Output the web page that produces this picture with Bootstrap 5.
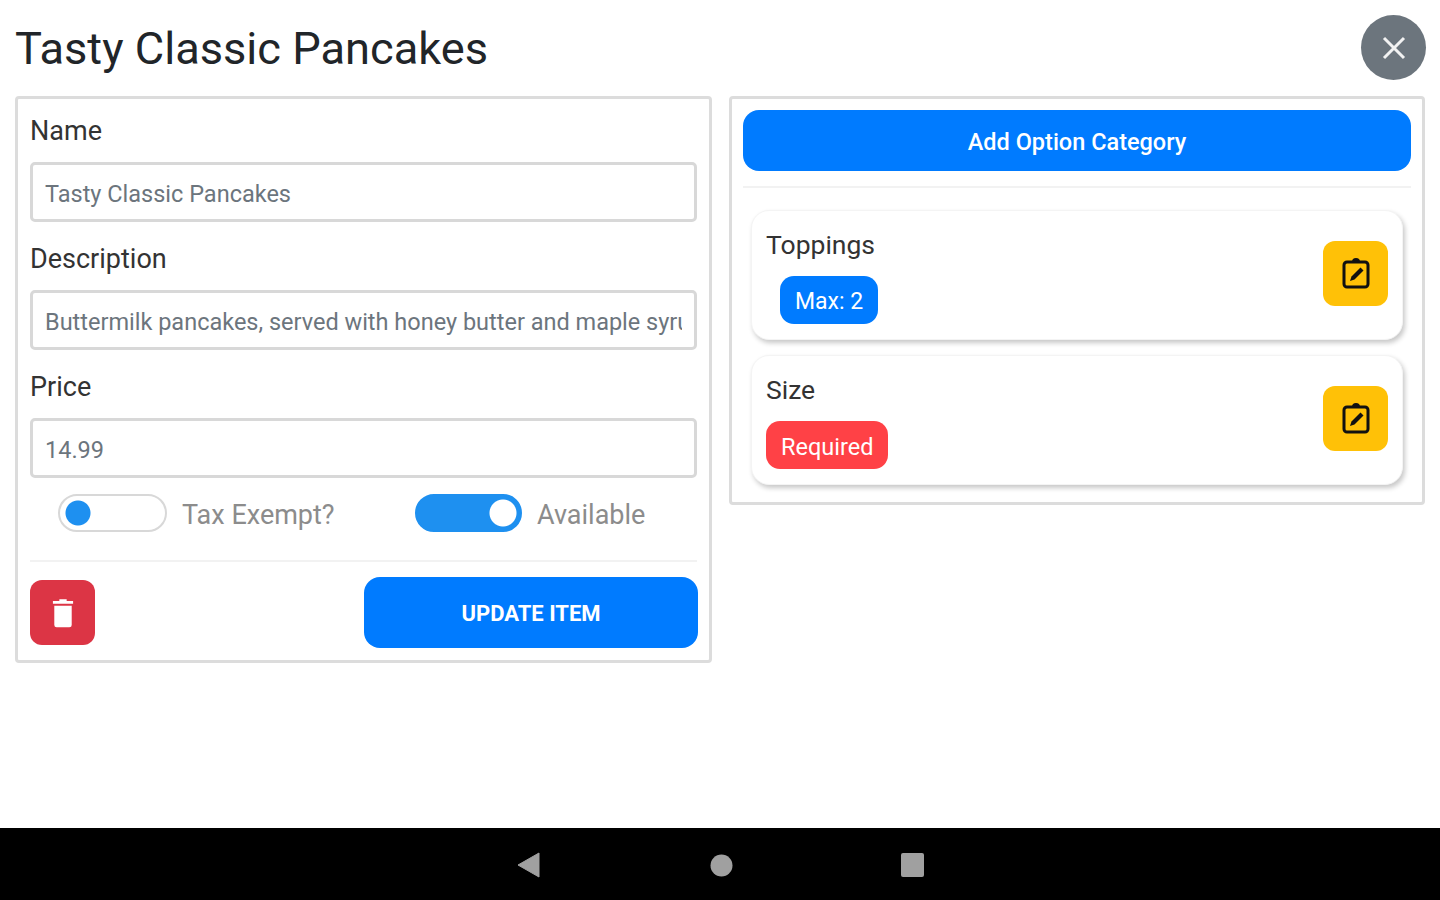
<!DOCTYPE html>
<html lang="en">
<head>
  <meta charset="UTF-8" />
  <title>Tasty Classic Pancakes</title>
  <link href="https://cdn.jsdelivr.net/npm/bootstrap@5.3.3/dist/css/bootstrap.min.css" rel="stylesheet" />
  <style>
    html, body { height: 900px; overflow: hidden; }
    body { font-family: Roboto, "Liberation Sans", sans-serif; background: #fff; color: #212529; }
    .app-screen { height: 828px; padding: 15px 15px 0 15px; }
    .item-title { font-size: 45.200px; font-weight: 400; line-height: 65px; margin: 1px 0 15px 0; }
    .close-round { width: 65px; height: 65px; border-radius: 50%; background: #6c757d; border: 0; padding: 0; margin-right: -1px; }
    .panel-gap { gap: 17px; }
    .edit-panel { flex: 0 0 697px; min-width: 0; border: 3px solid #dcdcdc; border-radius: 4px; padding: 13px 12px 12px 12px; }
    .edit-panel.right-panel { flex: 1 1 0; padding: 11px 11px 17px 11px; }
    .field-name { font-size: 27px; line-height: 36px; margin: 0 0 14px 0; padding-top: 1px; height: 36px; color: #333; display: block; }
    .field-input.form-control { height: 60px; font-size: 23.500px; color: #6c757d; border: 3px solid #d8d8d8; border-radius: 5px; padding: 4px 12px 0 12px; margin-bottom: 18px; font-family: inherit; }
    .toggle-row { padding-left: 28px; height: 38px; margin-top: -2px; }
    .toggle-cell { flex: 0 0 357px; }
    .toggle-cell input.form-check-input { width: 109px; height: 38px; margin: 0; border-radius: 19px; border: 2px solid #d8d8d8; background-color: #fff; background-repeat: no-repeat; background-size: 38px 38px; background-position: left -1px center; background-image: radial-gradient(circle, #1e90f0 12px, transparent 13px); float: none; }
    .toggle-cell input.form-check-input:checked { width: 107px; background-color: #1e90f0; border-color: #1e90f0; background-position: right -2px center; background-image: radial-gradient(circle, #fff 13px, transparent 14px); }
    .toggle-text { font-size: 27px; line-height: 36px; color: #8c8c8c; margin-left: 15px; padding-top: 4px; }
    .thin-rule { height: 2px; background: #f2f2f2; }
    .rule-left { margin: 28px 0 15px 0; }
    .rule-right { margin: 15px 0 22px 0; }
    .btn-trash { width: 65px; height: 65px; padding: 0; background: #dc3545; border: 0; border-radius: 12px; margin-top: 3px; }
    .btn-update { width: 334px; height: 71px; background: #007bff; border: 0; border-radius: 16px; font-size: 22px; font-weight: 700; color: #fff; padding-top: 8px; margin-right: -1px; }
    .btn-add { height: 61px; background: #007bff; border: 0; border-radius: 16px; font-size: 23.500px; font-weight: 500; color: #fff; padding-top: 10px; }
    .option-card.card { margin: 0 8px 15px 8px; height: 130px; border: 1px solid #f4f4f4; border-radius: 18px; box-shadow: 2px 3px 5px rgba(0,0,0,.22); padding: 0 14px 0 14px; }
    .option-card.card:last-child { margin-bottom: 0; }
    .option-name { font-size: 26.500px; line-height: 36px; color: #333; margin-bottom: 13px; }
    .option-tag { display: inline-block; height: 48px; line-height: 52px; padding: 0 15px; font-size: 23.500px; color: #fff; border-radius: 14px; }
    .tag-max { background: #007bff; margin-left: 14px; font-size: 23px; }
    .tag-required { background: #ff4146; }
    .btn-edit { width: 65px; height: 65px; padding: 0; background: #ffc107; border: 0; border-radius: 12px; margin-bottom: 4px; }
    .system-bar { height: 72px; background: #000; padding-top: 2px; }
    .sys-back { margin-left: 517px; }
    .sys-home { margin-left: 170px; }
    .sys-recent { margin-left: 168px; }
  </style>
</head>
<body>

  <div class="app-screen">
    <div class="d-flex justify-content-between align-items-start">
      <h1 class="item-title">Tasty Classic Pancakes</h1>
      <button class="close-round d-flex align-items-center justify-content-center" type="button" aria-label="Close">
        <svg width="24" height="24" viewBox="0 0 24 24"><path d="M2 2 22 22M22 2 2 22" stroke="#f2f2f2" stroke-width="3" fill="none"/></svg>
      </button>
    </div>

    <div class="d-flex align-items-start panel-gap">
      <div class="edit-panel">
        <label class="field-name">Name</label>
        <input class="form-control field-input" type="text" value="Tasty Classic Pancakes" />
        <label class="field-name">Description</label>
        <input class="form-control field-input" type="text" value="Buttermilk pancakes, served with honey butter and maple syrup" />
        <label class="field-name">Price</label>
        <input class="form-control field-input" type="text" value="14.99" />

        <div class="d-flex toggle-row">
          <div class="toggle-cell d-flex align-items-center">
            <input class="form-check-input" type="checkbox" role="switch" />
            <span class="toggle-text">Tax Exempt?</span>
          </div>
          <div class="d-flex align-items-center flex-grow-1">
            <div class="toggle-cell d-flex align-items-center">
              <input class="form-check-input" type="checkbox" role="switch" checked />
              <span class="toggle-text">Available</span>
            </div>
          </div>
        </div>

        <div class="thin-rule rule-left"></div>

        <div class="d-flex justify-content-between align-items-start">
          <button class="btn-trash d-flex align-items-center justify-content-center" type="button" aria-label="Delete">
            <svg width="22" height="30" viewBox="0 0 24 32"><path d="M8 1h8v2h7v3H1V3h7z" fill="#fff"/><path d="M2.500 8h19v21a2.500 2.500 0 0 1-2.500 2.500H5A2.500 2.500 0 0 1 2.500 29z" fill="#fff"/></svg>
          </button>
          <button class="btn btn-update" type="button">UPDATE ITEM</button>
        </div>
      </div>

      <div class="edit-panel right-panel">
        <button class="btn btn-add w-100" type="button">Add Option Category</button>
        <div class="thin-rule rule-right"></div>

        <div class="card option-card flex-row align-items-center justify-content-between">
          <div>
            <div class="option-name">Toppings</div>
            <span class="option-tag tag-max">Max: 2</span>
          </div>
          <button class="btn-edit d-flex align-items-center justify-content-center" type="button" aria-label="Edit">
            <svg width="28" height="32" viewBox="0 0 28 32"><rect x="2" y="5" width="24" height="25" rx="3" fill="none" stroke="#111" stroke-width="3"/><path d="M10 5a4 4 0 0 1 8 0z" fill="#111"/><path d="M8 24l1.500-4.500 9-9 3 3-9 9z" fill="#111"/></svg>
          </button>
        </div>

        <div class="card option-card flex-row align-items-center justify-content-between">
          <div>
            <div class="option-name">Size</div>
            <span class="option-tag tag-required">Required</span>
          </div>
          <button class="btn-edit d-flex align-items-center justify-content-center" type="button" aria-label="Edit">
            <svg width="28" height="32" viewBox="0 0 28 32"><rect x="2" y="5" width="24" height="25" rx="3" fill="none" stroke="#111" stroke-width="3"/><path d="M10 5a4 4 0 0 1 8 0z" fill="#111"/><path d="M8 24l1.500-4.500 9-9 3 3-9 9z" fill="#111"/></svg>
          </button>
        </div>
      </div>
    </div>
  </div>

  <div class="system-bar d-flex align-items-center">
    <svg class="sys-back" width="23" height="26" viewBox="0 0 23 26"><path d="M22 1v24L1 13z" fill="#a0a0a0" stroke="#a0a0a0" stroke-linejoin="round"/></svg>
    <svg class="sys-home" width="23" height="23" viewBox="0 0 23 23"><circle cx="11.500" cy="11.500" r="11" fill="#a0a0a0"/></svg>
    <svg class="sys-recent" width="23" height="24" viewBox="0 0 23 24"><rect width="23" height="24" rx="2" fill="#a0a0a0"/></svg>
  </div>

</body>
</html>
